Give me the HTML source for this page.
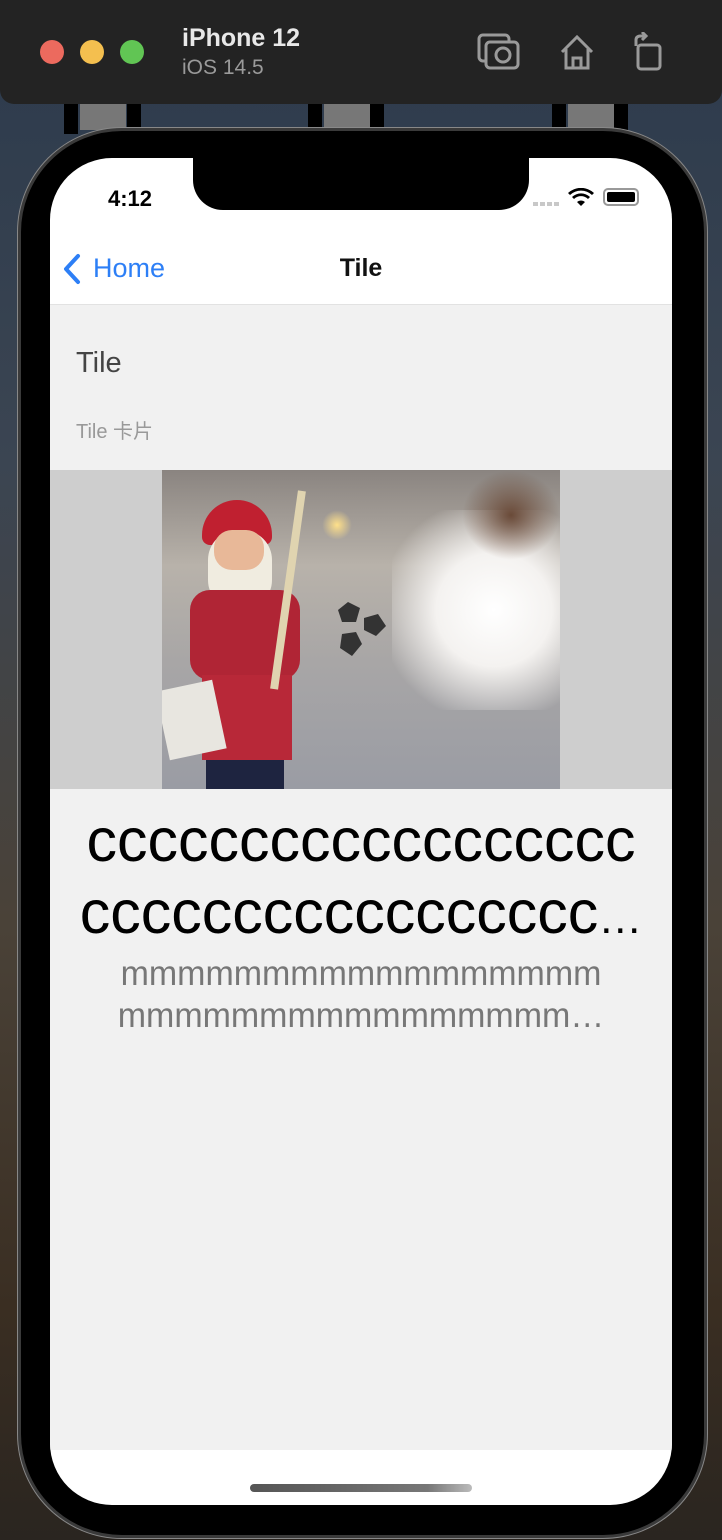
<!DOCTYPE html>
<html><head><meta charset="utf-8"><style>
*{margin:0;padding:0;box-sizing:border-box}
body{width:722px;height:1540px;overflow:hidden;position:relative;font-family:"Liberation Sans","Noto Sans CJK SC",sans-serif;
background:linear-gradient(180deg,#2c3a4c 0%,#3b4552 30%,#4a4238 60%,#3a2e22 85%,#2a2520 100%)}
.bar{position:absolute;left:0;top:0;width:722px;height:104px;background:#232323;border-radius:0 0 14px 14px}
.dot{position:absolute;top:40px;width:24px;height:24px;border-radius:50%}
.phone{position:absolute;left:18px;top:128px;width:689px;height:1410px;border-radius:104px;background:#000;border:3px solid #3a3a3a;box-shadow:0 0 0 1px #888}
.screen{position:absolute;left:50px;top:158px;width:622px;height:1347px;border-radius:62px;overflow:hidden;background:#fff}
.notch{position:absolute;left:143px;top:0;width:336px;height:52px;background:#000;border-radius:0 0 30px 30px}
.sq{position:absolute;top:104px;height:26px;background:#777}
.blk{position:absolute;top:104px;height:30px;width:14px;background:#000}
.ln{position:absolute;left:0;width:622px;text-align:center;white-space:nowrap}
</style></head><body>
<div class="blk" style="left:64px"></div><div class="sq" style="left:80px;width:46px"></div><div class="blk" style="left:127px"></div>
<div class="blk" style="left:308px"></div><div class="sq" style="left:324px;width:46px"></div><div class="blk" style="left:370px"></div>
<div class="blk" style="left:552px"></div><div class="sq" style="left:568px;width:46px"></div><div class="blk" style="left:614px"></div>
<div class="bar">
<div class="dot" style="left:40px;background:#ec6a5e"></div>
<div class="dot" style="left:80px;background:#f4bf4f"></div>
<div class="dot" style="left:120px;background:#61c554"></div>
<div style="position:absolute;left:182px;top:24px;color:#e8e8e8;font-weight:bold;font-size:25px">iPhone 12</div>
<div style="position:absolute;left:182px;top:56px;color:#9a9a9a;font-size:21px">iOS 14.5</div>
<svg style="position:absolute;left:476px;top:32px" width="200" height="40" viewBox="0 0 200 40" fill="none" stroke="#9a9a9a" stroke-width="3">
<rect x="3" y="3" width="30" height="26" rx="4"/><rect x="10" y="10" width="32" height="26" rx="4" fill="#232323"/><circle cx="27" cy="23" r="7"/>
<path d="M86 20 L101 5 L116 20 M90 17 V36 H112 V17 M97 36 V26 H105 V36"/>
<rect x="162" y="13" width="22" height="24" rx="3"/><path d="M160 14 V8 Q160 4 165 4 H170 M166 0 L170 4 L166 8"/>
</svg>
</div>
<div class="phone"></div>
<div class="screen">
<div class="notch"></div>
<div style="position:absolute;left:58px;top:28px;font-size:22px;font-weight:bold;color:#000">4:12</div>
<div style="position:absolute;left:483px;top:44px;width:26px;height:4px;background:repeating-linear-gradient(90deg,#c8c8c8 0 5px,transparent 5px 7px)"></div>
<svg style="position:absolute;left:518px;top:30px" width="26" height="20" viewBox="0 0 26 20"><path d="M13 18 L9 14 A6 6 0 0 1 17 14Z M4 9 A13 13 0 0 1 22 9 L20 11 A10 10 0 0 0 6 11Z M0 5 A19 19 0 0 1 26 5 L24 7 A16 16 0 0 0 2 7Z" fill="#000"/></svg>
<div style="position:absolute;left:553px;top:30px;width:36px;height:18px;border:2px solid #999;border-radius:5px;padding:2px"><div style="background:#000;width:100%;height:100%;border-radius:2px"></div></div>
<svg style="position:absolute;left:12px;top:95px" width="20" height="32" viewBox="0 0 20 32"><path d="M16 3 L4 16 L16 29" stroke="#2d7ff6" stroke-width="4" fill="none" stroke-linecap="round" stroke-linejoin="round"/></svg>
<div style="position:absolute;left:43px;top:95px;font-size:27px;color:#2d7ff6">Home</div>
<div style="position:absolute;left:0;width:622px;top:96px;text-align:center;font-size:25px;font-weight:bold;color:#111">Tile</div>
<div style="position:absolute;left:0;top:146px;width:622px;height:1146px;background:#f1f1f1;border-top:1px solid #e2e2e2">
<div style="position:absolute;left:26px;top:42px;font-size:29px;color:#444">Tile</div>
<div style="position:absolute;left:26px;top:110px;font-size:20px;color:#999">Tile 卡片</div>
<div style="position:absolute;left:0;top:165px;width:622px;height:319px;background:#cecece">
<div style="position:absolute;left:112px;top:0;width:398px;height:319px;overflow:hidden;background:linear-gradient(180deg,#8a8480 0%,#b8b2aa 30%,#a8a6a6 60%,#9a9ca4 100%)">
<div style="position:absolute;left:230px;top:40px;width:170px;height:200px;background:radial-gradient(ellipse at 60% 50%,#fff 0%,#f4f2f0 40%,rgba(220,215,210,0) 80%)"></div>
<div style="position:absolute;left:300px;top:0;width:98px;height:90px;background:radial-gradient(ellipse,#6a4a38,rgba(110,80,60,0) 70%)"></div>
<div style="position:absolute;left:160px;top:40px;width:30px;height:30px;border-radius:50%;background:radial-gradient(#ffe08a,rgba(255,200,100,0) 70%)"></div>
<div style="position:absolute;left:40px;top:30px;width:70px;height:45px;border-radius:35px 35px 8px 8px;background:#c02030"></div>
<div style="position:absolute;left:46px;top:60px;width:64px;height:80px;border-radius:30px;background:#f0ece0"></div>
<div style="position:absolute;left:52px;top:60px;width:50px;height:40px;border-radius:18px;background:#e8b898"></div>
<div style="position:absolute;left:28px;top:120px;width:110px;height:90px;border-radius:20px;background:#b02535"></div>
<div style="position:absolute;left:40px;top:205px;width:90px;height:85px;background:#b82838"></div>
<div style="position:absolute;left:44px;top:290px;width:78px;height:29px;background:#1e2440"></div>
<div style="position:absolute;left:0;top:215px;width:58px;height:70px;background:#e8e6e0;transform:rotate(-12deg)"></div>
<div style="position:absolute;left:122px;top:20px;width:8px;height:200px;background:#e0d4b0;transform:rotate(8deg)"></div>
<svg style="position:absolute;left:172px;top:130px" width="54" height="60" viewBox="0 0 54 60" fill="#333"><path d="M14 2 L26 8 L22 22 L8 22 L4 10Z M30 18 L44 14 L52 26 L42 36 L30 30Z M8 34 L22 32 L28 44 L18 56 L6 48Z"/></svg>
</div></div>
<div class="ln" style="top:500px;font-size:61px;line-height:70px;color:#000">cccccccccccccccccc</div>
<div class="ln" style="top:572px;font-size:61px;line-height:70px;color:#000">ccccccccccccccccc<span style="font-size:44px">…</span></div>
<div class="ln" style="top:648px;font-size:35px;line-height:42px;color:#777;transform:scaleX(0.97)">mmmmmmmmmmmmmmmmm</div>
<div class="ln" style="top:690px;font-size:35px;line-height:42px;color:#777;transform:scaleX(0.97)">mmmmmmmmmmmmmmmm…</div>
</div>
<div style="position:absolute;left:200px;top:1326px;width:222px;height:8px;border-radius:4px;background:linear-gradient(90deg,#555,#777 80%,#bbb)"></div>
</div>
</body></html>
